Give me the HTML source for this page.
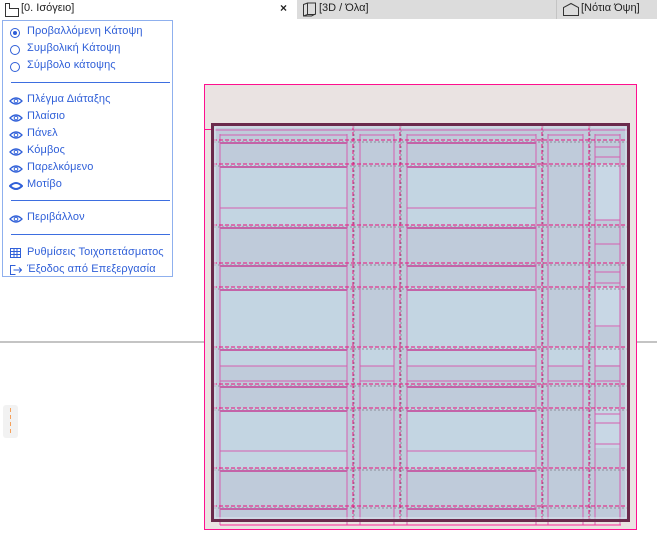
<!DOCTYPE html>
<html><head><meta charset="utf-8"><style>
body{margin:0;width:657px;height:559px;overflow:hidden;background:#fff;font-family:"Liberation Sans","DejaVu Sans",sans-serif;position:relative}
.tabbar{position:absolute;left:0;top:0;width:657px;height:19px;background:#fff}
.t2{position:absolute;left:297px;top:0;width:360px;height:19px;background:#dcdcdc}
.sep{position:absolute;left:556px;top:0;width:1px;height:19px;background:#c4c4c4}
.tt{position:absolute;top:2px;font-size:11px;color:#222}
.menu{position:absolute;left:2px;top:20px;width:169px;height:255px;border:1px solid #8fb0ee;background:#fff}
.it{position:absolute;left:24px;font-size:11px;color:#2f5fd8;white-space:nowrap;letter-spacing:0.1px}
.hr{position:absolute;left:8px;width:159px;height:1px;background:#3d6ee0}
.ic{position:absolute;left:6px}
</style></head><body>
<svg width="657" height="559" style="position:absolute;left:0;top:0" id="dr">
<line x1="0" y1="342" x2="204" y2="342" stroke="#888" stroke-width="1"/>
<line x1="636" y1="342" x2="657" y2="342" stroke="#888" stroke-width="1"/>
<rect x="3" y="405" width="15" height="33" rx="3" fill="#f2f2f2"/>
<line x1="10.5" y1="408" x2="10.5" y2="436" stroke="#f5a05a" stroke-width="1" stroke-dasharray="4,3"/>
<rect x="204.5" y="84.5" width="432" height="445" fill="#eae3e2" stroke="#ff0f8f"/>
<line x1="204" y1="129.5" x2="212" y2="129.5" stroke="#ff0f8f"/>
<g id="g" shape-rendering="crispEdges"></g>
</svg>
<div class="tabbar"></div><div class="t2"></div><div class="sep"></div>
<svg style="position:absolute;left:4px;top:2px" width="16" height="15"><path d="M1.5 14.5V1.5h4v5h9v8z" fill="none" stroke="#333"/></svg>
<div class="tt" style="left:21px">[0. Ισόγειο]</div>
<div class="tt" style="left:280px;top:1px;font-size:12px;font-weight:bold">×</div>
<svg style="position:absolute;left:302px;top:2px" width="15" height="15"><path d="M1.5 2.5l4-1.5h8v11l-4 2h-8z M5.5 1v11.5l-4 1.5 M5.5 12.5h8" fill="none" stroke="#333"/></svg>
<div class="tt" style="left:319px">[3D / Όλα]</div>
<svg style="position:absolute;left:562px;top:2px" width="18" height="15"><path d="M1.5 13.5V5.5l7.5-4 7.5 4v8z" fill="none" stroke="#333"/></svg>
<div class="tt" style="left:581px">[Νότια Όψη]</div>
<div class="menu">
<svg class="ic" style="top:6px" width="12" height="12"><circle cx="6" cy="6" r="4.5" fill="none" stroke="#2f5fd8"/><circle cx="6" cy="6" r="2" fill="#2f5fd8"/></svg>
<div class="it" style="top:4px">Προβαλλόμενη Κάτοψη</div>
<svg class="ic" style="top:23px" width="12" height="12"><circle cx="6" cy="6" r="4.5" fill="none" stroke="#2f5fd8"/></svg>
<div class="it" style="top:21px">Συμβολική Κάτοψη</div>
<svg class="ic" style="top:40px" width="12" height="12"><circle cx="6" cy="6" r="4.5" fill="none" stroke="#2f5fd8"/></svg>
<div class="it" style="top:38px">Σύμβολο κάτοψης</div>
<div class="hr" style="top:61px"></div>
<div id="eyes"></div>
<div class="it" style="top:72px">Πλέγμα Διάταξης</div>
<div class="it" style="top:89px">Πλαίσιο</div>
<div class="it" style="top:106px">Πάνελ</div>
<div class="it" style="top:123px">Κόμβος</div>
<div class="it" style="top:140px">Παρελκόμενο</div>
<div class="it" style="top:157px">Μοτίβο</div>
<div class="hr" style="top:179px"></div>
<div class="it" style="top:190px">Περιβάλλον</div>
<div class="hr" style="top:213px"></div>
<svg class="ic" style="top:226px" width="13" height="12"><rect x="1.5" y="1.5" width="10" height="9" fill="none" stroke="#2f5fd8"/><path d="M1.5 4.5h10M1.5 7.5h10M5 1.5v9M8 1.5v9" stroke="#2f5fd8"/></svg>
<div class="it" style="top:225px">Ρυθμίσεις Τοιχοπετάσματος</div>
<svg class="ic" style="top:243px" width="13" height="12"><path d="M6.5 1.5h-5v9h5M4.5 6h8M10 3.5l2.5 2.5-2.5 2.5" fill="none" stroke="#2f5fd8"/></svg>
<div class="it" style="top:242px">Έξοδος από Επεξεργασία</div>
</div>
<script>
var e='',ys=[74,91,108,125,142,192];
ys.forEach(function(y,i){e+='<svg class="ic" style="top:'+(y+1)+'px" width="14" height="10"><path d="M1 5Q7 -1 13 5Q7 11 1 5z" fill="none" stroke="#2f5fd8" stroke-width="1.3"/><circle cx="7" cy="5" r="1.8" fill="none" stroke="#2f5fd8"/></svg>';});
e+='<svg class="ic" style="top:160px" width="14" height="10"><path d="M1 5Q7 -1 13 5Q7 11 1 5z" fill="none" stroke="#2f5fd8" stroke-width="2"/></svg>';
document.getElementById('eyes').innerHTML=e;
var s='';
function R(x,y,w,h,f,st){s+='<rect x="'+x+'" y="'+y+'" width="'+w+'" height="'+h+'" fill="'+(f||'none')+'" stroke="'+(st||'none')+'"/>';}
function L(x1,y1,x2,y2,c,d,w){s+='<line x1="'+x1+'" y1="'+y1+'" x2="'+x2+'" y2="'+y2+'" stroke="'+c+'" stroke-width="'+(w||1)+'"'+(d?' stroke-dasharray="'+d+'"':'')+'/>';}
var SP='#bfcbda',GL='#c3d5e2',PK='#d45fb0';
R(212,124,417,396,SP);
var cols=[[220,347],[360,394],[407,536],[548,583],[595,620]];
var glass=[[164,225],[287,347],[347,366],[408,468]];
glass.forEach(function(g){[0,2].forEach(function(c){R(cols[c][0],g[0],cols[c][1]-cols[c][0],g[1]-g[0],GL);});});
R(360,347,34,19,GL);R(548,347,35,19,GL);
R(595,164,25,56,'#c8d7e5');R(595,287,25,40,'#c8d7e5');R(595,347,25,18,'#c8d7e5');R(595,408,25,40,'#c8d7e5');
var rows=[140,164,225,263,287,347,384,408,468,506];
rows.forEach(function(y){L(214,y+2,627,y+2,'#8d8d99','2,2');});
[353,400,542,589].forEach(function(x){L(x+1,126,x+1,519,'#8d8d99','2,2');});
cols.forEach(function(c){L(c[0],134,c[0],525,PK);L(c[1],134,c[1],525,PK);});
L(220,525,621,525,'#ff2a95');
L(215,130,627,130,PK);L(220,135,347,135,PK);L(360,135,394,135,PK);L(407,135,536,135,PK);L(548,135,583,135,PK);L(595,135,620,135,PK);
[208,451].forEach(function(y){[0,2].forEach(function(c){L(cols[c][0],y,cols[c][1],y,PK);});});
[366,381].forEach(function(y){cols.forEach(function(c){L(c[0],y,c[1],y,PK);});});
[147,157,220,244,272,283,326,414,423,444].forEach(function(y){L(595,y,620,y,PK);});
rows.forEach(function(y){[0,2].forEach(function(c){L(cols[c][0],y+3,cols[c][1],y+3,'#c463a8',null,2);});});
rows.forEach(function(y){L(213,y,628,y,'#e8107c','4,2');});
[353,400,542,589].forEach(function(x){L(x,126,x,519,'#e8107c','4,2');});
s+='<rect x="212.5" y="124.5" width="416" height="396" fill="none" stroke="#6b2a4c" stroke-width="3"/>';
s+='<rect x="215" y="127" width="411" height="391" fill="none" stroke="#dfe6ee" stroke-width="1"/>';
document.getElementById('g').innerHTML=s;
</script>
</body></html>
